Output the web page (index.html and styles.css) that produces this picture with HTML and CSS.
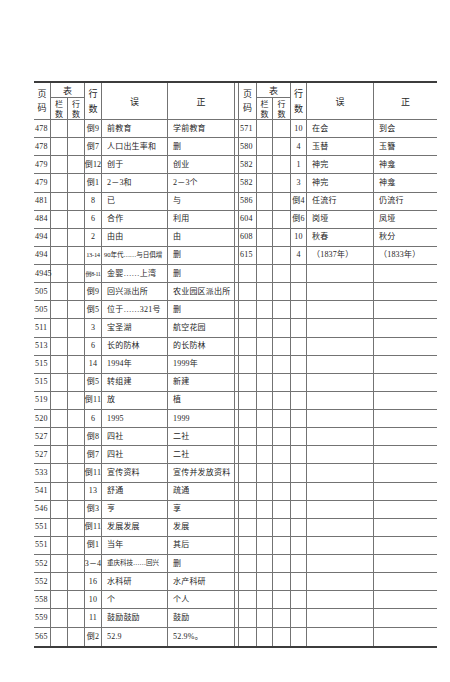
FILE: index.html
```html
<!DOCTYPE html>
<html lang="zh">
<head>
<meta charset="utf-8">
<title>勘误表</title>
<link rel="stylesheet" href="styles.css">
</head>
<body>
<div class="page">
  <div class="sheet">
    <div class="h h-pg r2"><span class="l14">页</span><span class="l14">码</span></div>
    <div class="h h-biao c2">表</div>
    <div class="h r2"><span class="l15">行</span><span class="l15">数</span></div>
    <div class="h r2">误</div>
    <div class="h r2">正</div>
    <div class="h gap r2"></div>
    <div class="h h-pg r2"><span class="l14">页</span><span class="l14">码</span></div>
    <div class="h h-biao c2">表</div>
    <div class="h r2"><span class="l15">行</span><span class="l15">数</span></div>
    <div class="h r2">误</div>
    <div class="h r2 last">正</div>
    <div class="h"><span class="l9">栏</span><span class="l9">数</span></div>
    <div class="h"><span class="l9">行</span><span class="l9">数</span></div>
    <div class="h"><span class="l9">栏</span><span class="l9">数</span></div>
    <div class="h"><span class="l9">行</span><span class="l9">数</span></div>

    <div class="c pg">478</div><div class="c"></div><div class="c"></div><div class="c ln">倒9</div><div class="c tx">前教育</div><div class="c tx">学前教育</div><div class="c gap"></div><div class="c pg">571</div><div class="c"></div><div class="c"></div><div class="c ln">10</div><div class="c tx">在会</div><div class="c tx last">到会</div>
    <div class="c pg">478</div><div class="c"></div><div class="c"></div><div class="c ln">倒7</div><div class="c tx">人口出生率和</div><div class="c tx">删</div><div class="c gap"></div><div class="c pg">580</div><div class="c"></div><div class="c"></div><div class="c ln">4</div><div class="c tx">玉替</div><div class="c tx last">玉簪</div>
    <div class="c pg">479</div><div class="c"></div><div class="c"></div><div class="c ln">倒12</div><div class="c tx">创于</div><div class="c tx">创业</div><div class="c gap"></div><div class="c pg">582</div><div class="c"></div><div class="c"></div><div class="c ln">1</div><div class="c tx">神完</div><div class="c tx last">神龛</div>
    <div class="c pg">479</div><div class="c"></div><div class="c"></div><div class="c ln">倒1</div><div class="c tx">2－3和</div><div class="c tx">2－3个</div><div class="c gap"></div><div class="c pg">582</div><div class="c"></div><div class="c"></div><div class="c ln">3</div><div class="c tx">神完</div><div class="c tx last">神龛</div>
    <div class="c pg">481</div><div class="c"></div><div class="c"></div><div class="c ln">8</div><div class="c tx">已</div><div class="c tx">与</div><div class="c gap"></div><div class="c pg">586</div><div class="c"></div><div class="c"></div><div class="c ln">倒4</div><div class="c tx">任流行</div><div class="c tx last">仍流行</div>
    <div class="c pg">484</div><div class="c"></div><div class="c"></div><div class="c ln">6</div><div class="c tx">合作</div><div class="c tx">利用</div><div class="c gap"></div><div class="c pg">604</div><div class="c"></div><div class="c"></div><div class="c ln">倒6</div><div class="c tx">岗垭</div><div class="c tx last">凤垭</div>
    <div class="c pg">494</div><div class="c"></div><div class="c"></div><div class="c ln">2</div><div class="c tx">由由</div><div class="c tx">由</div><div class="c gap"></div><div class="c pg">608</div><div class="c"></div><div class="c"></div><div class="c ln">10</div><div class="c tx">秋春</div><div class="c tx last">秋分</div>
    <div class="c pg">494</div><div class="c"></div><div class="c"></div><div class="c ln small">13-14</div><div class="c tx tight">90年代……与日俱增</div><div class="c tx">删</div><div class="c gap"></div><div class="c pg">615</div><div class="c"></div><div class="c"></div><div class="c ln">4</div><div class="c tx">（1837年）</div><div class="c tx last">（1833年）</div>
    <div class="c pg">4945</div><div class="c"></div><div class="c"></div><div class="c ln tiny">倒8-11</div><div class="c tx">金婴……上湾</div><div class="c tx">删</div><div class="c gap"></div><div class="c pg"></div><div class="c"></div><div class="c"></div><div class="c ln"></div><div class="c tx"></div><div class="c tx last"></div>
    <div class="c pg">505</div><div class="c"></div><div class="c"></div><div class="c ln">倒9</div><div class="c tx">回兴派出所</div><div class="c tx">农业园区派出所</div><div class="c gap"></div><div class="c pg"></div><div class="c"></div><div class="c"></div><div class="c ln"></div><div class="c tx"></div><div class="c tx last"></div>
    <div class="c pg">505</div><div class="c"></div><div class="c"></div><div class="c ln">倒5</div><div class="c tx">位于……321号</div><div class="c tx">删</div><div class="c gap"></div><div class="c pg"></div><div class="c"></div><div class="c"></div><div class="c ln"></div><div class="c tx"></div><div class="c tx last"></div>
    <div class="c pg">511</div><div class="c"></div><div class="c"></div><div class="c ln">3</div><div class="c tx">宝圣湖</div><div class="c tx">航空花园</div><div class="c gap"></div><div class="c pg"></div><div class="c"></div><div class="c"></div><div class="c ln"></div><div class="c tx"></div><div class="c tx last"></div>
    <div class="c pg">513</div><div class="c"></div><div class="c"></div><div class="c ln">6</div><div class="c tx">长的防林</div><div class="c tx">的长防林</div><div class="c gap"></div><div class="c pg"></div><div class="c"></div><div class="c"></div><div class="c ln"></div><div class="c tx"></div><div class="c tx last"></div>
    <div class="c pg">515</div><div class="c"></div><div class="c"></div><div class="c ln">14</div><div class="c tx">1994年</div><div class="c tx">1999年</div><div class="c gap"></div><div class="c pg"></div><div class="c"></div><div class="c"></div><div class="c ln"></div><div class="c tx"></div><div class="c tx last"></div>
    <div class="c pg">515</div><div class="c"></div><div class="c"></div><div class="c ln">倒5</div><div class="c tx">转组建</div><div class="c tx">新建</div><div class="c gap"></div><div class="c pg"></div><div class="c"></div><div class="c"></div><div class="c ln"></div><div class="c tx"></div><div class="c tx last"></div>
    <div class="c pg">519</div><div class="c"></div><div class="c"></div><div class="c ln">倒11</div><div class="c tx">放</div><div class="c tx">植</div><div class="c gap"></div><div class="c pg"></div><div class="c"></div><div class="c"></div><div class="c ln"></div><div class="c tx"></div><div class="c tx last"></div>
    <div class="c pg">520</div><div class="c"></div><div class="c"></div><div class="c ln">6</div><div class="c tx">1995</div><div class="c tx">1999</div><div class="c gap"></div><div class="c pg"></div><div class="c"></div><div class="c"></div><div class="c ln"></div><div class="c tx"></div><div class="c tx last"></div>
    <div class="c pg">527</div><div class="c"></div><div class="c"></div><div class="c ln">倒8</div><div class="c tx">四社</div><div class="c tx">二社</div><div class="c gap"></div><div class="c pg"></div><div class="c"></div><div class="c"></div><div class="c ln"></div><div class="c tx"></div><div class="c tx last"></div>
    <div class="c pg">527</div><div class="c"></div><div class="c"></div><div class="c ln">倒7</div><div class="c tx">四社</div><div class="c tx">二社</div><div class="c gap"></div><div class="c pg"></div><div class="c"></div><div class="c"></div><div class="c ln"></div><div class="c tx"></div><div class="c tx last"></div>
    <div class="c pg">533</div><div class="c"></div><div class="c"></div><div class="c ln">倒11</div><div class="c tx">宣传资料</div><div class="c tx">宣传并发放资料</div><div class="c gap"></div><div class="c pg"></div><div class="c"></div><div class="c"></div><div class="c ln"></div><div class="c tx"></div><div class="c tx last"></div>
    <div class="c pg">541</div><div class="c"></div><div class="c"></div><div class="c ln">13</div><div class="c tx">舒通</div><div class="c tx">疏通</div><div class="c gap"></div><div class="c pg"></div><div class="c"></div><div class="c"></div><div class="c ln"></div><div class="c tx"></div><div class="c tx last"></div>
    <div class="c pg">546</div><div class="c"></div><div class="c"></div><div class="c ln">倒3</div><div class="c tx">亨</div><div class="c tx">享</div><div class="c gap"></div><div class="c pg"></div><div class="c"></div><div class="c"></div><div class="c ln"></div><div class="c tx"></div><div class="c tx last"></div>
    <div class="c pg">551</div><div class="c"></div><div class="c"></div><div class="c ln">倒11</div><div class="c tx">发展发展</div><div class="c tx">发展</div><div class="c gap"></div><div class="c pg"></div><div class="c"></div><div class="c"></div><div class="c ln"></div><div class="c tx"></div><div class="c tx last"></div>
    <div class="c pg">551</div><div class="c"></div><div class="c"></div><div class="c ln">倒1</div><div class="c tx">当年</div><div class="c tx">其后</div><div class="c gap"></div><div class="c pg"></div><div class="c"></div><div class="c"></div><div class="c ln"></div><div class="c tx"></div><div class="c tx last"></div>
    <div class="c pg">552</div><div class="c"></div><div class="c"></div><div class="c ln">3－4</div><div class="c tx squeeze">重庆科技……回兴</div><div class="c tx">删</div><div class="c gap"></div><div class="c pg"></div><div class="c"></div><div class="c"></div><div class="c ln"></div><div class="c tx"></div><div class="c tx last"></div>
    <div class="c pg">552</div><div class="c"></div><div class="c"></div><div class="c ln">16</div><div class="c tx">水科研</div><div class="c tx">水产科研</div><div class="c gap"></div><div class="c pg"></div><div class="c"></div><div class="c"></div><div class="c ln"></div><div class="c tx"></div><div class="c tx last"></div>
    <div class="c pg">558</div><div class="c"></div><div class="c"></div><div class="c ln">10</div><div class="c tx">个</div><div class="c tx">个人</div><div class="c gap"></div><div class="c pg"></div><div class="c"></div><div class="c"></div><div class="c ln"></div><div class="c tx"></div><div class="c tx last"></div>
    <div class="c pg">559</div><div class="c"></div><div class="c"></div><div class="c ln">11</div><div class="c tx">鼓励鼓励</div><div class="c tx">鼓励</div><div class="c gap"></div><div class="c pg"></div><div class="c"></div><div class="c"></div><div class="c ln"></div><div class="c tx"></div><div class="c tx last"></div>
    <div class="c pg">565</div><div class="c"></div><div class="c"></div><div class="c ln">倒2</div><div class="c tx">52.9</div><div class="c tx">52.9%。</div><div class="c gap"></div><div class="c pg"></div><div class="c"></div><div class="c"></div><div class="c ln"></div><div class="c tx"></div><div class="c tx last"></div>
  </div>
</div>
</body>
</html>
```

FILE: styles.css
```css
html, body {
  margin: 0;
  padding: 0;
  background: #ffffff;
}

.page {
  padding: 81px 0 0 34px;
  font-family: "Liberation Serif", "Noto Sans CJK SC", serif;
  color: #262626;
}

.sheet {
  width: 403px;
  display: grid;
  grid-template-columns: 17px 17px 17px 17px 66px 67px 4px 18px 16px 18px 16px 67px 63px;
  grid-template-rows: 15px 22px repeat(29, 18.14px);
  border-top: 2px solid #3c3c3c;
  border-bottom: 2px solid #3c3c3c;
}

.h, .c {
  box-sizing: border-box;
  border-right: 1px solid #737373;
  border-bottom: 1px solid #737373;
  display: flex;
  align-items: center;
  white-space: nowrap;
  min-width: 0;
}

.h {
  flex-direction: column;
  justify-content: center;
  font-family: "Noto Sans CJK SC", serif;
  font-size: 9px;
  line-height: 1;
}

.r2 { grid-row: span 2; }
.c2 { grid-column: span 2; }

.l14 { display: block; line-height: 14px; }
.l15 { display: block; line-height: 15px; }
.l9 { display: block; line-height: 10px; font-size: 8px; }

.last { border-right: none; }

.c {
  font-size: 8px;
  line-height: 1;
  letter-spacing: 0.2px;
}

.pg {
  justify-content: flex-start;
  padding-left: 1px;
}

.ln {
  justify-content: center;
}

.tx {
  justify-content: flex-start;
  padding-left: 5px;
}

.small {
  font-size: 6.5px;
  letter-spacing: -0.3px;
}

.tiny {
  font-size: 6px;
  letter-spacing: -0.4px;
}

.tight {
  padding-left: 2px;
  font-size: 6.6px;
  letter-spacing: -0.1px;
}

.squeeze {
  font-size: 6.5px;
  letter-spacing: 0;
}

.sheet > :nth-last-child(-n+13) {
  border-bottom: none;
}
```
